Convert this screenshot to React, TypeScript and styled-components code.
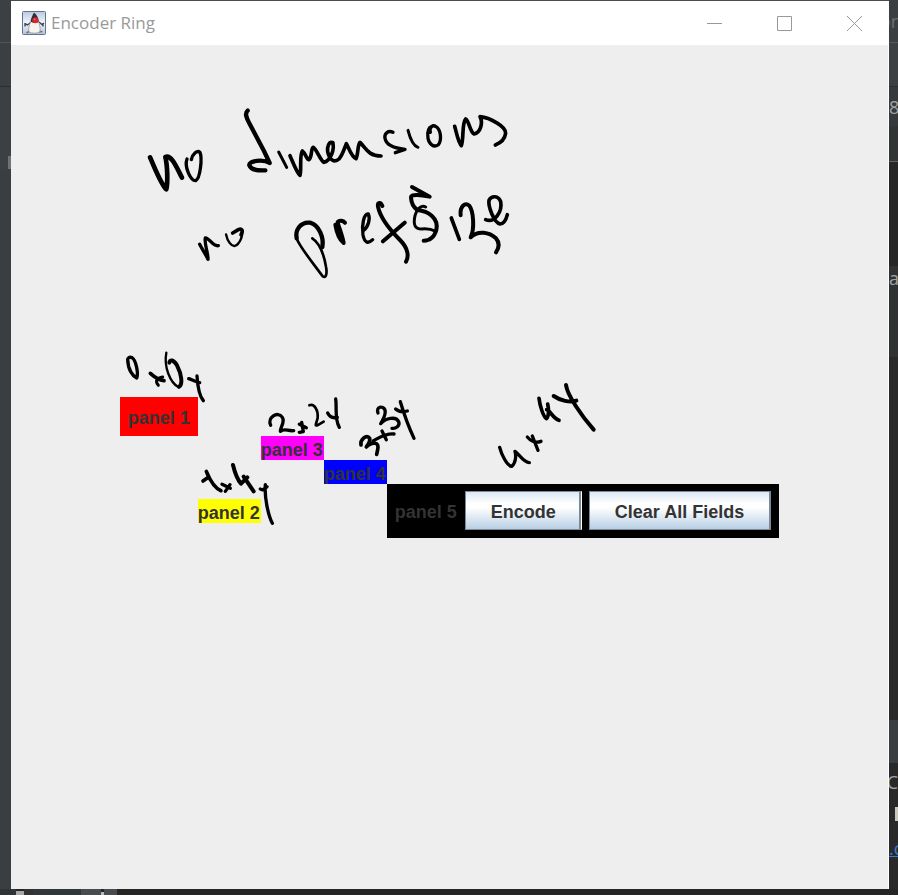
import React from "react";
import styled, { createGlobalStyle } from "styled-components";

const GlobalStyle = createGlobalStyle`
  *, *::before, *::after { box-sizing: border-box; }
  body { margin: 0; background: #2b2b2b; }
`;

const Desktop = styled.div`
  display: grid;
  grid-template-columns: 11px minmax(0, 1fr) 9px;
  grid-template-rows: minmax(0, 1fr) 6px;
  min-height: 100vh;
  font-family: "Open Sans", "Noto Sans", sans-serif;
`;

const EditorEdge = styled.div<{ $color: string }>`
  display: flex;
  flex-direction: column;
  overflow: hidden;
  background: ${(p) => p.$color};
`;

const EdgeBlock = styled.div<{ $height: number; $color: string; $line?: string; $align?: string }>`
  display: flex;
  flex: none;
  align-items: ${(p) => p.$align ?? "center"};
  height: ${(p) => p.$height}px;
  background: ${(p) => p.$color};
  border-bottom: ${(p) => (p.$line ? `1px solid ${p.$line}` : "0")};
  color: #a0a4a8;
  font-size: 18px;
  line-height: 24px;
  white-space: nowrap;
  overflow: hidden;
`;

const Clipped = styled.span<{ $end?: boolean; $dim?: boolean }>`
  display: flex;
  width: 9px;
  justify-content: ${(p) => (p.$end ? "flex-end" : "flex-start")};
  color: ${(p) => (p.$dim ? "#6c6f71" : "inherit")};
  overflow: hidden;
`;

const EdgeLink = styled.a`
  color: #3b7ad0;
  text-decoration: underline;
`;

const EdgeMark = styled.span<{ $color: string }>`
  width: 3px;
  height: 14px;
  margin-left: auto;
  background: ${(p) => p.$color};
`;

const BottomEdge = styled.div`
  grid-column: 1 / -1;
  display: grid;
  grid-template-columns: 16px 8px 9px 48px 20px 3px 13px 1fr;
  background: #262626;
`;

const BottomCell = styled.span<{ $color: string; $top?: number }>`
  margin-top: ${(p) => p.$top ?? 0}px;
  background: ${(p) => p.$color};
`;

const Window = styled.main`
  display: flex;
  flex-direction: column;
  min-width: 0;
  border-top: 1px solid #4a4a4a;
  background: #eeeeee;
`;

const TitleBar = styled.header`
  display: flex;
  align-items: center;
  height: 44px;
  padding-left: 11px;
  background: #ffffff;
`;

const Title = styled.h1`
  flex: 1;
  margin: 0 0 0 5px;
  color: #999999;
  font-size: 17px;
  font-weight: 400;
  line-height: 24px;
`;

const WindowButton = styled.button`
  display: flex;
  align-items: center;
  justify-content: center;
  width: 70px;
  height: 44px;
  padding: 0;
  border: 0;
  background: transparent;
`;

const Canvas = styled.section`
  position: relative;
  display: flex;
  flex: 1;
  align-items: center;
  justify-content: center;
  border-right: 1px solid #ffffff;
`;

const Ink = styled.svg`
  position: absolute;
  inset: 0;
  width: 100%;
  height: 100%;
  pointer-events: none;
`;

const PanelGrid = styled.div`
  display: grid;
  grid-template-columns: repeat(5, auto);
  grid-template-rows: 39px 24px 24px 54px;
  align-items: center;
  font-family: "Liberation Sans", Arial, sans-serif;
  font-size: 18px;
  font-weight: 700;
  color: #333333;
`;

const Panel = styled.div<{ $col: number; $row: number; $color: string; $pad?: string }>`
  grid-column: ${(p) => p.$col};
  grid-row: ${(p) => p.$row};
  display: flex;
  align-items: center;
  gap: 7px;
  padding: ${(p) => p.$pad ?? "0"};
  background: ${(p) => p.$color};
  white-space: nowrap;
`;

const Label = styled.span`
  min-width: 63px;
  padding-top: 4px;
  line-height: 20px;
`;

const MetalButton = styled.button`
  height: 39px;
  padding: 4px 25px 0;
  border: 1px solid #7a8a99;
  border-right-width: 2px;
  background: linear-gradient(#dde8f3 0%, #ffffff 32%, #ffffff 42%, #b8cfe5 100%);
  color: #333333;
  font: inherit;
`;

const EncodeButton = styled(MetalButton)`
  border-right: 1px solid #ffffff;
  box-shadow: inset -2px 0 0 #7a8a99;
`;

type Stroke = [width: number, path: string];

/* Pen strokes are recorded at three units to the pixel from each note's origin. */
const notes: { x: number; y: number; strokes: Stroke[] }[] = [
  {
    x: 140,
    y: 95,
    strokes: [
      [14, "M30 187C45 220 62 266 79 283C84 260 82 210 76 186C94 176 112 222 126 248"],
      [10, "M141 192C132 215 152 258 167 257C181 250 187 190 180 172C172 164 158 176 154 194"],
      [13, "M323 47C313 55 320 70 328 85L372 168L389 204C370 192 325 197 328 211C335 227 355 227 376 226"],
      [9, "M416 171L440 217"],
      [11, "M450 182C458 200 470 233 480 241C485 225 478 180 487 168C497 175 500 195 507 194C517 185 512 160 520 157C530 162 540 195 552 202C570 198 585 165 578 143"],
    ],
  },
  {
    x: 320,
    y: 95,
    strokes: [
      [11, "M38 143C27 138 21 155 23 170C28 195 43 205 57 192C68 180 73 160 79 146C85 155 94 185 108 191C115 180 112 150 120 142C138 160 145 183 183 183"],
      [10, "M219 112C205 105 192 115 195 130C198 150 225 160 255 163L226 173"],
      [9, "M264 106C269 125 280 153 294 157"],
      [10, "M331 112C327 99 337 87 348 95C362 103 367 137 354 150C341 159 327 147 324 130C321 111 326 97 337 93"],
      [11, "M404 94C410 115 415 143 424 152C432 130 425 85 437 72C448 80 450 110 462 117C481 113 490 85 480 65C510 68 559 95 557 115C554 135 540 145 526 150"],
    ],
  },
  {
    x: 180,
    y: 175,
    strokes: [
      [10, "M59 208C66 222 78 239 84 253C85 235 72 205 76 189C90 190 98 215 115 212"],
      [7, "M138 178C142 200 155 214 164 213C180 208 190 180 186 165"],
      [11, "M183 179C191 165 184 160 175 164L158 174"],
      [13, "M427 216C432 190 418 150 390 143C360 140 345 167 350 190"],
      [8, "M350 190C358 215 400 265 428 304C438 312 442 295 438 275C432 240 420 205 397 190"],
      [12, "M466 149C470 175 480 195 491 204C487 180 475 153 473 141C478 135 490 137 495 143"],
    ],
  },
  {
    x: 340,
    y: 175,
    strokes: [
      [10, "M70 167C86 155 91 130 85 117C72 115 64 150 69 180C74 206 86 206 98 194"],
      [12, "M127 93C122 80 112 82 114 95C121 130 150 165 180 195C205 220 207 245 198 260M129 199L194 143"],
      [12, "M216 36L269 65C245 60 213 55 213 68C214 85 222 98 232 105C265 108 297 130 289 165C282 189 267 197 251 197"],
      [9, "M257 96C245 89 232 100 225 122C219 150 225 162 245 162C263 160 275 163 288 169"],
      [11, "M334 129L358 193"],
      [12, "M362 121C359 94 375 81 388 92C401 110 404 162 392 187C415 165 448 172 468 190C481 205 476 220 468 232"],
      [11, "M437 134C463 145 488 110 482 80C475 61 454 61 447 76C444 95 462 143 480 147C492 147 498 135 502 119"],
    ],
  },
  {
    x: 110,
    y: 340,
    strokes: [
      [10, "M53 58C54 90 68 108 80 114C86 102 78 60 66 53C58 50 53 53 53 60"],
      [11, "M121 100C132 110 148 120 162 122"],
      [9, "M158 111C143 113 133 122 145 136"],
      [7, "M169 38C161 80 180 128 206 142"],
      [12, "M178 68C179 57 191 59 201 76C215 103 219 134 207 140"],
      [10, "M236 116C245 119 262 127 269 128M261 108C263 140 270 170 280 182"],
      [11, "M279 423L296 411L289 394C301 423 317 446 333 452"],
      [10, "M336 433L361 445M360 434L346 454"],
      [12, "M369 375C375 400 385 422 393 431L412 412M401 410L431 454"],
      [10, "M451 447C458 452 465 447 471 440M466 434C463 470 474 525 487 550"],
    ],
  },
  {
    x: 250,
    y: 390,
    strokes: [
      [10, "M62 106C51 83 83 61 97 82C106 96 91 111 91 124C105 114 112 124 131 122"],
      [10, "M148 103L169 113M155 97L160 125L148 127"],
      [8, "M178 46C193 40 205 60 203 84C199 101 193 109 202 106L221 95"],
      [10, "M233 69C240 83 250 85 262 82M257 27C261 50 253 89 268 112"],
      [11, "M333 165C330 149 350 131 359 145C362 158 354 163 349 171C369 153 389 157 383 179L380 193"],
      [10, "M370 152C388 143 409 129 432 132M396 123L409 149"],
      [10, "M384 69C377 49 399 46 405 60C409 75 398 89 392 101C407 84 438 78 446 95C451 107 437 117 426 115"],
      [10, "M437 57C446 66 459 66 472 63M451 35C463 75 478 115 492 145"],
    ],
  },
  {
    x: 380,
    y: 370,
    strokes: [
      [10, "M359 232C364 252 381 288 395 289C407 280 409 258 405 244C420 255 430 277 448 278"],
      [10, "M442 201C455 216 470 219 483 214M457 198L474 241"],
      [11, "M477 85C480 110 490 139 499 146C507 140 507 119 503 102M500 119C510 121 519 145 537 151"],
      [12, "M521 78C540 91 570 99 589 92M558 45C562 76 603 135 641 179"],
    ],
  },
];

function DukeIcon() {
  return (
    <svg width="24" height="24" viewBox="0 0 24 24" aria-hidden="true">
      <defs>
        <linearGradient id="sky" x1="0" y1="0" x2="0" y2="1">
          <stop offset="0" stopColor="#b9c9df" />
          <stop offset=".5" stopColor="#f2f5fa" />
          <stop offset="1" stopColor="#b4c2d8" />
        </linearGradient>
      </defs>
      <rect x=".5" y=".5" width="23" height="23" rx="1" fill="url(#sky)" stroke="#61738f" />
      <path d="M7 20.5 4.5 22M17 21l3.5-.5" fill="none" stroke="#6d7681" strokeWidth="1.5" />
      <path d="M8.5 11.5 5.5 14 2.5 12.5M3 12v3.5M17 11l3 2.5 2-1.5M21 12v3.5" fill="none" stroke="#3c4653" strokeWidth="1.4" />
      <path d="M9 10.5C7 14 6.2 18 7 21c3 1.6 8.5 1.6 11-.4.4-4-.2-7-1.8-10Z" fill="#f6f4ee" stroke="#8c9096" strokeWidth=".7" />
      <path d="M12 1.5C10.5 4 9 7 8.5 10.5c2 1.8 6 2 8.3 0C16.8 7 14.5 3.5 12 1.5Z" fill="#2b303d" />
      <circle cx="13.3" cy="9.2" r="3" fill="#d9252e" />
      <circle cx="12.5" cy="8.2" r=".8" fill="#ef7b78" />
    </svg>
  );
}

export default function App() {
  return (
    <>
      <GlobalStyle />
      <Desktop>
        <EditorEdge $color="#3b3e40" aria-hidden="true">
          <EdgeBlock $height={43} $color="#3d4042" $line="#515456" />
          <EdgeBlock $height={44} $color="#3c3f41" $line="#2b2d2e" />
          <EdgeBlock $height={69} $color="#3d4042" />
          <EdgeBlock $height={13} $color="#3d4042">
            <EdgeMark $color="#707375" />
          </EdgeBlock>
        </EditorEdge>
        <Window>
          <TitleBar>
            <DukeIcon />
            <Title>Encoder Ring</Title>
            <WindowButton aria-label="Minimize">
              <svg width="15" height="15" stroke="#999" fill="none"><path d="M0 7.5h15" /></svg>
            </WindowButton>
            <WindowButton aria-label="Maximize">
              <svg width="15" height="15" stroke="#999" fill="none"><path d="M.5.5h14v14H.5Z" /></svg>
            </WindowButton>
            <WindowButton aria-label="Close">
              <svg width="15" height="15" stroke="#999" fill="none"><path d="m0 0 15 15M15 0 0 15" /></svg>
            </WindowButton>
          </TitleBar>
          <Canvas>
            <PanelGrid>
              <Panel $col={1} $row={1} $color="#ff0000" $pad="7px 7px 8px 8px"><Label>panel 1</Label></Panel>
              <Panel $col={2} $row={4} $color="#ffff00"><Label>panel 2</Label></Panel>
              <Panel $col={3} $row={2} $color="#ff00ff"><Label>panel 3</Label></Panel>
              <Panel $col={4} $row={3} $color="#0000ff"><Label>panel 4</Label></Panel>
              <Panel $col={5} $row={4} $color="#000000" $pad="7px 8px 8px">
                <Label>panel 5</Label>
                <EncodeButton>Encode</EncodeButton>
                <MetalButton>Clear All Fields</MetalButton>
              </Panel>
            </PanelGrid>
            <Ink
              viewBox="11 45 877 844"
              role="img"
              aria-label="Pen notes: no dimensions, no prefSize, 0x0y, 1x4y, 2x2y, 3x3y, 4x4y"
            >
              {notes.map((note) => (
                <g
                  key={`${note.x}-${note.y}`}
                  transform={`translate(${note.x} ${note.y}) scale(${1 / 3})`}
                  fill="none"
                  stroke="#000"
                  strokeLinecap="round"
                  strokeLinejoin="round"
                >
                  {note.strokes.map(([width, path]) => (
                    <path key={path} d={path} strokeWidth={width} />
                  ))}
                </g>
              ))}
            </Ink>
          </Canvas>
        </Window>
        <EditorEdge $color="#292929" aria-hidden="true">
          <EdgeBlock $height={43} $color="#3c3f41" $line="#55585a">
            <Clipped $end $dim>or</Clipped>
          </EdgeBlock>
          <EdgeBlock $height={44} $color="#3c4043" $line="#2d2f30" />
          <EdgeBlock $height={39} $color="#37393b"><Clipped>8</Clipped></EdgeBlock>
          <EdgeBlock $height={36} $color="#333435" $line="#606263" />
          <EdgeBlock $height={104} $color="#262626" />
          <EdgeBlock $height={91} $color="#303132" $align="flex-start"><Clipped>a</Clipped></EdgeBlock>
          <EdgeBlock $height={364} $color="#292929" $line="#393b3c" />
          <EdgeBlock $height={42} $color="#3b3e40" />
          <EdgeBlock $height={37} $color="#292929"><Clipped $end>C</Clipped></EdgeBlock>
          <EdgeBlock $height={28} $color="#292929"><EdgeMark $color="#c8c8bc" /></EdgeBlock>
          <EdgeBlock $height={40} $color="#292929"><Clipped><EdgeLink href="#log">.c</EdgeLink></Clipped></EdgeBlock>
        </EditorEdge>
        <BottomEdge aria-hidden="true">
          <BottomCell $color="#303335" />
          <BottomCell $color="#a5a7a8" $top={2} />
          <BottomCell $color="#303234" />
          <BottomCell $color="#303736" />
          <BottomCell $color="#484c51" />
          <BottomCell $color="#b8bbbd" $top={3} />
          <BottomCell $color="#484c51" />
        </BottomEdge>
      </Desktop>
    </>
  );
}
